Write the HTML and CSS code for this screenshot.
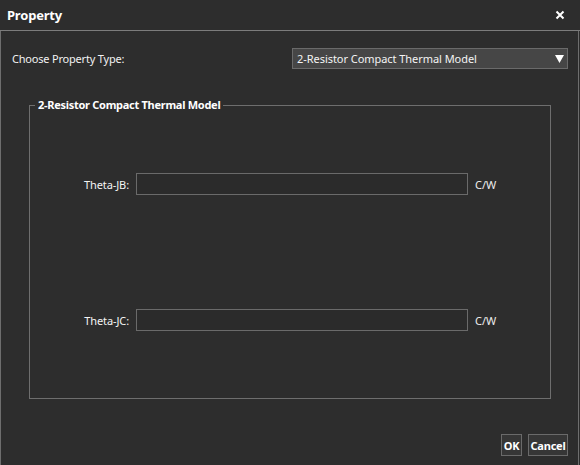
FILE: index.html
```html
<!DOCTYPE html>
<html>
<head>
<meta charset="utf-8">
<link rel="stylesheet" href="styles.css">
</head>
<body>
<div class="window">
  <div class="titlebar">
    <span class="title">Property</span>
    <svg class="close" width="10" height="10" viewBox="0 0 10 10"><path d="M1.5 1.5 L8.5 8.5 M8.5 1.5 L1.5 8.5" stroke="#ffffff" stroke-width="2"/></svg>
  </div>
  <div class="body">
    <div class="choose">
      <span class="label">Choose Property Type:</span>
      <div class="select">
        <span>2-Resistor Compact Thermal Model</span>
        <svg class="arrow" width="9" height="8" viewBox="0 0 9 8"><path d="M0 0 L9 0 L4.5 8 Z" fill="#ffffff"/></svg>
      </div>
    </div>
    <fieldset class="group">
      <legend>2-Resistor Compact Thermal Model</legend>
      <div class="field first">
        <span class="flabel">Theta-JB:</span>
        <div class="input"></div>
        <span class="unit">C/W</span>
      </div>
      <div class="field second">
        <span class="flabel">Theta-JC:</span>
        <div class="input"></div>
        <span class="unit">C/W</span>
      </div>
    </fieldset>
    <div class="buttons">
      <div class="btn ok">OK</div>
      <div class="btn cancel">Cancel</div>
    </div>
  </div>
</div>
</body>
</html>
```
FILE: styles.css
```css
html, body {
  margin: 0;
  padding: 0;
  background: #2d2d2d;
}
.window {
  width: 580px;
  height: 465px;
  background: #2d2d2d;
  color: #f2f2f2;
  font-family: "Noto Sans", "Open Sans", sans-serif;
  font-size: 11px;
  box-sizing: border-box;
  display: flex;
  flex-direction: column;
}
.titlebar {
  height: 30px;
  flex: none;
  border-bottom: 1px solid #7c7c7c;
  display: flex;
  align-items: center;
  justify-content: space-between;
  padding: 0 15px 0 7px;
  box-sizing: content-box;
}
.title {
  font-weight: bold;
  font-size: 13px;
  color: #ffffff;
  letter-spacing: -0.2px;
}
.close {
  display: block;
}
.body {
  flex: 1;
  border-left: 1px solid #6e6e6e;
  border-right: 1px solid #6e6e6e;
  margin-right: 1px;
  display: flex;
  flex-direction: column;
}
.choose {
  display: flex;
  align-items: center;
  justify-content: space-between;
  margin-top: 17px;
  padding: 0 10px 0 11px;
}
.label {
  letter-spacing: -0.2px;
}
.select {
  width: 276px;
  height: 21px;
  box-sizing: border-box;
  background: #464646;
  border: 1px solid #6a6a6a;
  display: flex;
  align-items: center;
  justify-content: space-between;
  padding: 0 3px 0 4px;
  color: #f4f4f4;
  letter-spacing: -0.05px;
}
.arrow {
  display: block;
}
.group {
  margin: 29px 0 0 28px;
  width: 522px;
  height: 301px;
  box-sizing: border-box;
  border: 1px solid #6e6e6e;
  padding: 0;
  min-width: 0;
}
.group legend {
  font-weight: bold;
  color: #ffffff;
  margin-left: 5px;
  padding: 0 3px;
  line-height: 14px;
  letter-spacing: -0.28px;
}
.field {
  display: flex;
  align-items: center;
  height: 22px;
}
.field.first {
  margin-top: 61px;
}
.field.second {
  margin-top: 114px;
}
.flabel {
  width: 99px;
  text-align: right;
  color: #f4f4f4;
  letter-spacing: -0.1px;
}
.input {
  width: 332px;
  height: 22px;
  box-sizing: border-box;
  border: 1px solid #6a6a6a;
  background: #2b2b2b;
  margin-left: 7px;
}
.unit {
  margin-left: 7px;
  color: #eeeeee;
}
.buttons {
  display: flex;
  justify-content: flex-end;
  gap: 6px;
  margin-top: 35px;
  padding-right: 10px;
}
.btn {
  height: 22px;
  box-sizing: border-box;
  border: 1px solid #6a6a6a;
  background: #363636;
  font-weight: bold;
  color: #ffffff;
  display: flex;
  align-items: center;
  justify-content: center;
  letter-spacing: -0.2px;
}
.btn.ok { width: 21px; }
.btn.cancel { width: 40px; }
```
